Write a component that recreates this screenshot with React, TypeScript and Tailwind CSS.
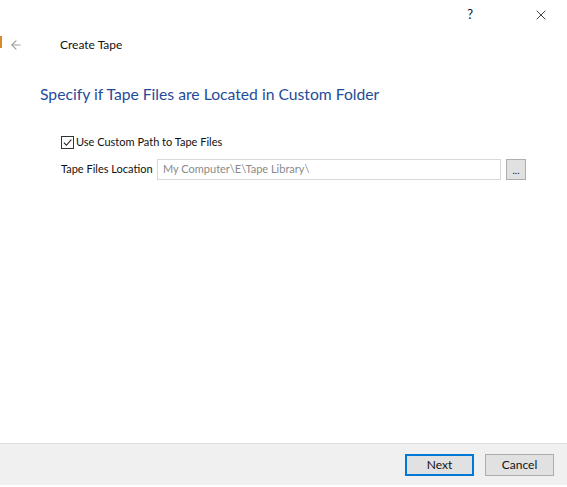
import { ArrowLeft, X } from "lucide-react";

export default function App() {
  return (
    <div className="relative flex h-[487px] w-[567px] flex-col overflow-hidden bg-white text-[11px] text-[#111] [font-family:Lato,'Noto_Sans',sans-serif]">
      {/* orange accent left edge */}
      <span className="absolute left-0 top-[36px] h-[12px] w-[2px] bg-[#d88a2a]" />

      {/* title bar */}
      <div className="flex h-[30px] items-center justify-end">
        <span className="mr-[60px] text-[13px]">?</span>
        <X className="mr-[18px] h-[16px] w-[16px]" strokeWidth={1.2} />
      </div>

      {/* nav row */}
      <div className="flex h-[30px] items-center">
        <ArrowLeft className="ml-[9px] h-[14px] w-[14px] text-[#a0a0a0]" strokeWidth={2} />
        <span className="ml-[37px] text-[12px]">Create Tape</span>
      </div>

      <div className="flex-1 px-[40px] pt-[24px]">
        <h1 className="whitespace-nowrap text-[15.7px] leading-[20px] text-[#1f4b99]">
          Specify if Tape Files are Located in Custom Folder
        </h1>

        <div className="mt-[30px] pl-[21px]">
          <label className="flex items-center">
            <span className="flex h-[13px] w-[13px] items-center justify-center border border-[#333]">
              <svg viewBox="0 0 12 12" className="h-[11px] w-[11px]">
                <path d="M2 6.2 L4.8 9 L10.2 2.8" fill="none" stroke="#222" strokeWidth="1.2" />
              </svg>
            </span>
            <span className="ml-[2px] whitespace-nowrap">Use Custom Path to Tape Files</span>
          </label>

          <div className="mt-[8px] flex items-center">
            <span className="w-[96px] whitespace-nowrap">Tape Files Location</span>
            <div className="flex h-[21px] w-[344px] items-center whitespace-nowrap border border-[#d9d9d9] px-[5px] text-[#8a8a8a]">
              My Computer\E\Tape Library\
            </div>
            <button className="ml-[5px] flex h-[21px] w-[20px] items-end justify-center border border-[#adadad] bg-[#e1e1e1] pb-[4px] text-[10px] leading-none">
              ...
            </button>
          </div>
        </div>
      </div>

      {/* footer */}
      <div className="flex h-[42px] items-center justify-end border-t border-[#dfdfdf] bg-[#f0f0f0] pr-[13px]">
        <button className="h-[22px] w-[69px] border-2 border-[#0078d7] bg-[#e1e1e1] text-[12px]">
          Next
        </button>
        <button className="ml-[11px] h-[22px] w-[69px] border border-[#adadad] bg-[#e1e1e1] text-[12px]">
          Cancel
        </button>
      </div>
      <div className="h-[2px] bg-white" />
    </div>
  );
}
